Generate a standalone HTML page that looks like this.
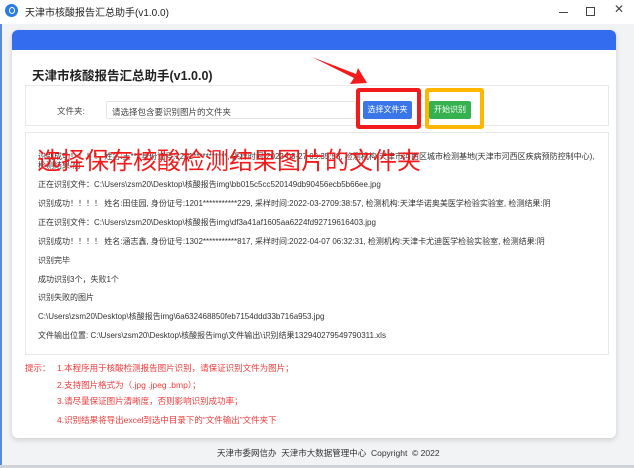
<!DOCTYPE html>
<html><head><meta charset="utf-8"><style>
*{margin:0;padding:0;box-sizing:border-box}
body{width:634px;height:468px;overflow:hidden;background:#f2f3f5;font-family:"Liberation Sans","Noto Sans CJK SC",sans-serif;position:relative;color:#333}
.a{position:absolute;white-space:nowrap}
.tb{left:0;top:0;width:634px;height:24px;background:#fff}
.card{left:12px;top:30px;width:604px;height:408px;background:#fff;border-radius:6px;box-shadow:0 2px 6px rgba(0,0,0,.15);overflow:hidden}
.log{font-size:8px;color:#333;left:38px}
.tip{font-size:8.5px;color:#f03c3c}
</style></head><body>
<div class="a tb"></div>
<div class="a" style="left:0;top:24px;width:2px;height:444px;background:#5a8ad8"></div>
<div class="a" style="left:5px;top:4px;width:13px;height:13px;border-radius:50%;background:#2a7de1"></div>
<div class="a" style="left:8.5px;top:7px;width:6px;height:7px;border-radius:50%;border:1.5px solid #fff"></div>
<div class="a" style="left:25px;top:4px;font-size:10px;color:#222">天津市核酸报告汇总助手(v1.0.0)</div>
<div class="a" style="left:559px;top:12px;width:9px;height:1px;background:#444"></div>
<div class="a" style="left:586px;top:7px;width:9px;height:9px;border:1px solid #444"></div>
<div class="a" style="left:614px;top:2px;font-size:12px;color:#444">✕</div>

<div class="a card"><div style="height:20px;background:#346cf0"></div></div>
<div class="a" style="left:32px;top:65px;font-size:12.5px;font-weight:bold;color:#222">天津市核酸报告汇总助手(v1.0.0)</div>

<div class="a" style="left:25px;top:85px;width:584px;height:41px;border:1px solid #e8e8e8"></div>
<div class="a" style="left:57px;top:105px;font-size:8.5px;color:#444">文件夹:</div>
<div class="a" style="left:106px;top:101px;width:250px;height:18px;border:1px solid #e4e4e4;border-radius:2px;font-size:8.5px;padding:4px 5px;color:#444">请选择包含要识别图片的文件夹</div>
<div class="a" style="left:363px;top:101px;width:49px;height:18px;background:#3a76e8;border-radius:2px;color:#fff;font-size:8px;text-align:center;line-height:18px">选择文件夹</div>
<div class="a" style="left:429px;top:101px;width:42px;height:18px;background:#35b24f;border-radius:2px;color:#fff;font-size:8px;text-align:center;line-height:18px">开始识别</div>
<div class="a" style="left:356px;top:88px;width:65px;height:41px;border:4px solid #f21a1a;border-radius:3px"></div>
<div class="a" style="left:425px;top:88px;width:59px;height:41px;border:4px solid #fdb700;border-radius:3px"></div>
<svg class="a" style="left:0;top:0" width="634" height="468"><polygon points="312,57 356,74 358,68 367,83 350,84 354,78" fill="#f21a1a"/></svg>

<div class="a" style="left:25px;top:132px;width:584px;height:223px;border:1px solid #e8e8e8"></div>
<div class="a log" style="top:152px;white-space:normal;width:560px;line-height:9px">识别成功！！！！ 姓名:王**, 身份证号:1201***********, 采样时间:2022-03-27 09:35:58, 检测机构:天津市河西区城市检测基地(天津市河西区疾病预防控制中心), 检测结果:阴</div>
<div class="a log" style="top:179px">正在识别文件：C:\Users\zsm20\Desktop\核酸报告img\bb015c5cc520149db90456ecb5b66ee.jpg</div>
<div class="a log" style="top:198px">识别成功！！！！ 姓名:田佳园, 身份证号:1201***********229, 采样时间:2022-03-2709:38:57, 检测机构:天津华诺奥美医学检验实验室, 检测结果:阴</div>
<div class="a log" style="top:217px">正在识别文件：C:\Users\zsm20\Desktop\核酸报告img\df3a41af1605aa6224fd92719616403.jpg</div>
<div class="a log" style="top:236px">识别成功！！！！ 姓名:涵志鑫, 身份证号:1302***********817, 采样时间:2022-04-07 06:32:31, 检测机构:天津卡尤迪医学检验实验室, 检测结果:阴</div>
<div class="a log" style="top:255px">识别完毕</div>
<div class="a log" style="top:274px">成功识别3个，失败1个</div>
<div class="a log" style="top:292px">识别失败的图片</div>
<div class="a log" style="top:311px">C:\Users\zsm20\Desktop\核酸报告img\6a632468850feb7154ddd33b716a953.jpg</div>
<div class="a log" style="top:330px">文件输出位置: C:\Users\zsm20\Desktop\核酸报告img\文件输出\识别结果132940279549790311.xls</div>
<div class="a" style="left:37px;top:141px;font-size:24px;color:#f21a1a">选择保存核酸检测结果图片的文件夹</div>

<div class="a tip" style="left:25px;top:362px">提示：</div>
<div class="a tip" style="left:57px;top:362px">1.本程序用于核酸检测报告图片识别，请保证识别文件为图片；</div>
<div class="a tip" style="left:57px;top:379px">2.支持图片格式为（.jpg .jpeg .bmp）；</div>
<div class="a tip" style="left:57px;top:395px">3.请尽量保证图片清晰度，否则影响识别成功率；</div>
<div class="a tip" style="left:57px;top:414px">4.识别结果将导出excel到选中目录下的“文件输出”文件夹下</div>

<div class="a" style="left:217px;top:447px;font-size:8.5px;color:#333">天津市委网信办&nbsp; 天津市大数据管理中心&nbsp; Copyright&nbsp; © 2022</div>
<div class="a" style="left:0;top:465px;width:634px;height:3px;background:#d0d4da"></div>
</body></html>
